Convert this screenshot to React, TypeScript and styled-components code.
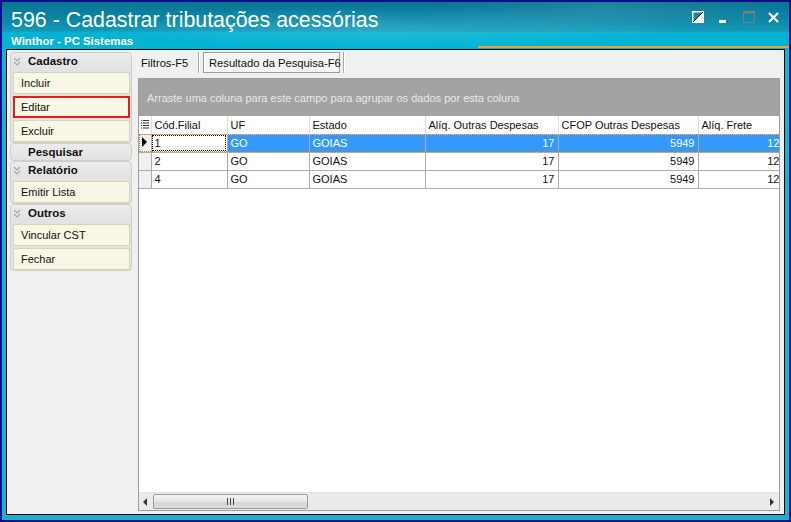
import React, { FC } from "react";
import styled, { createGlobalStyle } from "styled-components";

const GlobalStyle = createGlobalStyle`
  html, body {
    margin: 0;
    padding: 0;
    width: 791px;
    height: 522px;
    overflow: hidden;
    background: #0d0d8c;
  }
  * { box-sizing: border-box; }
`;

const font = `"Liberation Sans", Arial, sans-serif`;

const Frame = styled.div`
  width: 791px;
  height: 522px;
  border: 2px solid #0d0d8c;
  background: #16b3cc;
  display: flex;
  flex-direction: column;
  font-family: ${font};
`;

const TitleBar = styled.div`
  position: relative;
  height: 47px;
  flex: none;
  padding: 6px 0 0 9px;
  color: #fff;
  background:
    radial-gradient(ellipse 260px 40px at 600px 8px, rgba(255, 255, 255, 0.1), transparent 70%),
    radial-gradient(ellipse 420px 30px at 380px 26px, rgba(120, 220, 240, 0.25), transparent 70%),
    linear-gradient(180deg, #087493 0%, #0d88a8 40%, #1399b8 62%, #06b2d0 64%, #02b4d3 100%);
`;

const OrangeLine = styled.div`
  position: absolute;
  left: 476px;
  right: 0;
  top: 44px;
  height: 2px;
  background: #e8a43a;
`;

const Title = styled.div`
  font-size: 21.4px;
  line-height: 24px;
`;

const Subtitle = styled.div`
  font-size: 11.4px;
  font-weight: bold;
  line-height: 14px;
  margin-top: 2px;
`;

const Controls = styled.div`
  position: absolute;
  right: 10px;
  top: 9px;
  display: flex;
  align-items: center;
  gap: 11px;
`;

const Content = styled.div`
  flex: 1;
  min-height: 0;
  margin: 0 4px 5px 4px;
  border: 1px solid #000;
  background: #f0f0f0;
  display: flex;
  padding: 2px 4px 3px 3px;
  gap: 6px;
`;

const SidePanel = styled.div`
  width: 122px;
  flex: none;
  display: flex;
  flex-direction: column;
`;

const Section = styled.div`
  border: 1px solid #cfcfcf;
  border-radius: 4px;
  background: linear-gradient(180deg, #ececec 0px, #e2e2e2 16px, #e6e6e6 100%);
`;

const SectionHeader = styled.div`
  height: 16px;
  display: flex;
  align-items: center;
  padding-left: 2px;
  gap: 7px;
  font-size: 11.5px;
  font-weight: bold;
  color: #111;
`;

const ChevronSlot = styled.span`
  width: 8px;
  display: inline-flex;
  justify-content: center;
`;

const Items = styled.div`
  display: flex;
  flex-direction: column;
  gap: 2px;
  padding: 3px 1px 0 2px;
`;

const Item = styled.div<{ $active?: boolean }>`
  height: 22px;
  display: flex;
  align-items: center;
  font-size: 11px;
  color: #111;
  background: #f8f6e4;
  border: ${({ $active }) => ($active ? "2px solid #e41d1d" : "1px solid #d9d5b3")};
  padding-left: ${({ $active }) => ($active ? "6px" : "7px")};
`;

const Main = styled.div`
  flex: 1;
  min-width: 0;
  display: flex;
  flex-direction: column;
`;

const TabStrip = styled.div`
  height: 21px;
  flex: none;
  display: flex;
  align-items: stretch;
  margin-bottom: 5px;
`;

const Tab = styled.div<{ $selected?: boolean }>`
  flex: none;
  display: flex;
  align-items: center;
  white-space: nowrap;
  font-size: 11.2px;
  color: #111;
  padding: 0 ${({ $selected }) => ($selected ? "5px" : "3px")};
  ${({ $selected }) =>
    $selected
      ? `border: 1px solid #9c9c9c; box-shadow: inset 1px 1px 0 #fff; background: #f5f5f5; width: 137px;`
      : `width: 57px;`}
`;

const TabSep = styled.div`
  width: 2px;
  flex: none;
  margin: 0 3px;
  border-left: 1px solid #a8a8a8;
  border-right: 1px solid #fff;
`;

const GridBox = styled.div`
  flex: 1;
  min-height: 0;
  border: 1px solid #9d9d9d;
  background: #fff;
  display: flex;
  flex-direction: column;
  overflow: hidden;
`;

const GroupPanel = styled.div`
  height: 37px;
  flex: none;
  background: #a3a3a3;
  color: #e8e8e8;
  font-size: 11px;
  display: flex;
  align-items: center;
  padding-left: 8px;
  white-space: nowrap;
`;

const TableArea = styled.div`
  flex: 1;
  overflow: hidden;
`;

const Table = styled.table`
  border-collapse: collapse;
  table-layout: fixed;
  width: 644px;
  font-size: 11px;
  color: #111;
  font-family: ${font};
`;

const Th = styled.th`
  height: 18px;
  padding: 0 3px;
  font-weight: normal;
  text-align: left;
  white-space: nowrap;
  overflow: hidden;
  border-right: 1px solid #dedede;
  border-bottom: 1px solid #c9c9c9;
  background: #fff;
`;

const IndicatorTh = styled(Th)`
  padding: 0;
  text-align: center;
`;

const Row = styled.tr<{ $selected?: boolean }>`
  height: 18px;
  outline: ${({ $selected }) => ($selected ? "1px dotted #d07a28" : "none")};
  outline-offset: -1px;
`;

const Td = styled.td<{ $num?: boolean; $sel?: boolean; $focus?: boolean }>`
  padding: 0 3px;
  white-space: nowrap;
  overflow: hidden;
  text-align: ${({ $num }) => ($num ? "right" : "left")};
  border: 1px solid #acacac;
  background: ${({ $sel }) => ($sel ? "#3399ff" : "#fff")};
  color: ${({ $sel }) => ($sel ? "#fff" : "#111")};
  ${({ $focus }) => ($focus ? "outline: 1px dotted #000; outline-offset: -2px;" : "")}
`;

const IndicatorTd = styled.td`
  padding: 0;
  border: 1px solid #acacac;
  border-left: none;
  background: #f0f0f0;
  text-align: center;
`;

const ScrollBar = styled.div`
  height: 18px;
  flex: none;
  background: #ebebeb;
  border-top: 1px solid #e2e2e2;
  display: flex;
  align-items: center;
  padding: 0 5px 0 4px;
  gap: 4px;
`;

const Arrow = styled.div<{ $right?: boolean }>`
  width: 0;
  height: 0;
  border-top: 4px solid transparent;
  border-bottom: 4px solid transparent;
  ${({ $right }) => ($right ? "border-left: 4px solid #333; margin-left: auto;" : "border-right: 4px solid #333;")}
`;

const Thumb = styled.div`
  width: 155px;
  height: 15px;
  margin-left: 2px;
  border: 1px solid #9a9a9a;
  border-radius: 2px;
  background: linear-gradient(180deg, #f4f4f4 0%, #e6e6e6 50%, #d6d6d6 51%, #dcdcdc 100%);
  display: flex;
  align-items: center;
  justify-content: center;
`;

const Grip = styled.div`
  width: 7px;
  height: 7px;
  background: repeating-linear-gradient(90deg, #444 0 1px, transparent 1px 3px);
`;

const Chevron: FC = () => (
  <svg width="8" height="9" viewBox="0 0 8 9">
    <polyline points="1,1 4,4 7,1" fill="none" stroke="#a6a6a6" strokeWidth="1.2" />
    <polyline points="1,5 4,8 7,5" fill="none" stroke="#a6a6a6" strokeWidth="1.2" />
  </svg>
);

const columns = [
  { key: "filial", title: "Cód.Filial", width: 76 },
  { key: "uf", title: "UF", width: 82 },
  { key: "estado", title: "Estado", width: 116 },
  { key: "aliqOutras", title: "Alíq. Outras Despesas", width: 133, num: true },
  { key: "cfop", title: "CFOP Outras Despesas", width: 140, num: true },
  { key: "frete", title: "Alíq. Frete", width: 85, num: true },
];

const rows = [
  { filial: "1", uf: "GO", estado: "GOIAS", aliqOutras: "17", cfop: "5949", frete: "12" },
  { filial: "2", uf: "GO", estado: "GOIAS", aliqOutras: "17", cfop: "5949", frete: "12" },
  { filial: "4", uf: "GO", estado: "GOIAS", aliqOutras: "17", cfop: "5949", frete: "12" },
];

type Key = keyof (typeof rows)[number];

const sections = [
  { title: "Cadastro", chevron: true, items: ["Incluir", "Editar", "Excluir"] },
  { title: "Pesquisar", chevron: false, items: [] as string[] },
  { title: "Relatório", chevron: true, items: ["Emitir Lista"] },
  { title: "Outros", chevron: true, items: ["Vincular CST", "Fechar"] },
];

const App: FC = () => {
  return (
    <>
      <GlobalStyle />
      <Frame>
        <TitleBar>
          <Title>596 - Cadastrar tributações acessórias</Title>
          <Subtitle>Winthor - PC Sistemas</Subtitle>
          <OrangeLine />
          <Controls>
            <svg width="12" height="12" viewBox="0 0 12 12">
              <rect x="0.75" y="0.75" width="10.5" height="10.5" fill="none" stroke="#fff" strokeWidth="1.5" />
              <polygon points="11,1 11,11 1,11" fill="#fff" />
              <line x1="1" y1="11" x2="11" y2="1" stroke="#111" strokeWidth="1" />
            </svg>
            <svg width="12" height="12" viewBox="0 0 12 12" style={{ marginLeft: 2 }}>
              <rect x="2" y="9" width="7" height="3" fill="#fff" />
            </svg>
            <svg width="12" height="12" viewBox="0 0 12 12" style={{ marginLeft: 3 }}>
              <rect x="0.5" y="0.5" width="11" height="11" fill="none" stroke="#7d7d7d" strokeWidth="1" />
              <rect x="0" y="0" width="12" height="2.5" fill="#7d7d7d" />
            </svg>
            <svg width="11" height="11" viewBox="0 0 11 11" style={{ marginLeft: 2 }}>
              <path d="M1 1 L10 10 M10 1 L1 10" stroke="#fff" strokeWidth="2.2" />
            </svg>
          </Controls>
        </TitleBar>
        <Content>
          <SidePanel>
            {sections.map((s) => (
              <Section key={s.title}>
                <SectionHeader>
                  <ChevronSlot>{s.chevron && <Chevron />}</ChevronSlot>
                  {s.title}
                </SectionHeader>
                {s.items.length > 0 && (
                  <Items>
                    {s.items.map((it) => (
                      <Item key={it} $active={it === "Editar"}>
                        {it}
                      </Item>
                    ))}
                  </Items>
                )}
              </Section>
            ))}
          </SidePanel>
          <Main>
            <TabStrip>
              <Tab>Filtros-F5</Tab>
              <TabSep />
              <Tab $selected>Resultado da Pesquisa-F6</Tab>
              <TabSep />
            </TabStrip>
            <GridBox>
              <GroupPanel>Arraste uma coluna para este campo para agrupar os dados por esta coluna</GroupPanel>
              <TableArea>
                <Table>
                  <colgroup>
                    <col style={{ width: 12 }} />
                    {columns.map((c) => (
                      <col key={c.key} style={{ width: c.width }} />
                    ))}
                  </colgroup>
                  <thead>
                    <tr>
                      <IndicatorTh>
                        <svg width="8" height="9" viewBox="0 0 8 9">
                          <rect x="0" y="0" width="1" height="1" fill="#333" />
                          <rect x="2" y="0" width="6" height="1" fill="#333" />
                          <rect x="0" y="2.5" width="1" height="1" fill="#333" />
                          <rect x="2" y="2.5" width="6" height="1" fill="#333" />
                          <rect x="0" y="5" width="1" height="1" fill="#333" />
                          <rect x="2" y="5" width="6" height="1" fill="#333" />
                          <rect x="0" y="7.5" width="1" height="1" fill="#333" />
                          <rect x="2" y="7.5" width="6" height="1" fill="#333" />
                        </svg>
                      </IndicatorTh>
                      {columns.map((c) => (
                        <Th key={c.key}>{c.title}</Th>
                      ))}
                    </tr>
                  </thead>
                  <tbody>
                    {rows.map((r, i) => (
                      <Row key={r.filial} $selected={i === 0}>
                        <IndicatorTd>
                          {i === 0 && (
                            <svg width="7" height="10" viewBox="0 0 7 10">
                              <polygon points="1,0 6,5 1,10" fill="#000" />
                            </svg>
                          )}
                        </IndicatorTd>
                        {columns.map((c, ci) => (
                          <Td
                            key={c.key}
                            $num={c.num}
                            $sel={i === 0 && ci > 0}
                            $focus={i === 0 && ci === 0}
                          >
                            {r[c.key as Key]}
                          </Td>
                        ))}
                      </Row>
                    ))}
                  </tbody>
                </Table>
              </TableArea>
              <ScrollBar>
                <Arrow />
                <Thumb>
                  <Grip />
                </Thumb>
                <Arrow $right />
              </ScrollBar>
            </GridBox>
          </Main>
        </Content>
      </Frame>
    </>
  );
};

export default App;
